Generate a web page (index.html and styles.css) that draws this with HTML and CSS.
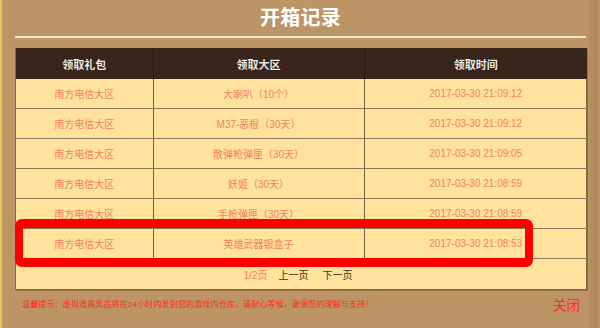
FILE: index.html
```html
<!DOCTYPE html>
<html lang="zh-CN">
<head>
<meta charset="utf-8">
<title>开箱记录</title>
<link rel="stylesheet" href="styles.css">
</head>
<body>
<div class="popup">
  <h1 class="title">开箱记录</h1>
  <div class="panel">
    <table class="records">
      <colgroup>
        <col class="c1"><col class="c2"><col class="c3">
      </colgroup>
      <thead>
        <tr><th>领取礼包</th><th>领取大区</th><th>领取时间</th></tr>
      </thead>
      <tbody>
        <tr><td>南方电信大区</td><td>大喇叭（10个）</td><td>2017-03-30 21:09:12</td></tr>
        <tr><td>南方电信大区</td><td>M37-恶棍（30天）</td><td>2017-03-30 21:09:12</td></tr>
        <tr><td>南方电信大区</td><td>散弹枪弹匣（30天）</td><td>2017-03-30 21:09:05</td></tr>
        <tr><td>南方电信大区</td><td>妖姬（30天）</td><td>2017-03-30 21:08:59</td></tr>
        <tr><td>南方电信大区</td><td>手枪弹匣（30天）</td><td>2017-03-30 21:08:59</td></tr>
        <tr><td>南方电信大区</td><td>英雄武器银盒子</td><td>2017-03-30 21:08:53</td></tr>
      </tbody>
    </table>
    <div class="pager">
      <span class="page-num">1/2页</span>
      <a class="page-link">上一页</a>
      <a class="page-link">下一页</a>
    </div>
  </div>
  <div class="footer">
    <p class="tip">温馨提示：虚拟道具奖品将在24小时内发到您的游戏内仓库，请耐心等候，谢谢您的理解与支持！</p>
    <a class="close">关闭</a>
  </div>
  <div class="highlight"></div>
</div>
</body>
</html>
```

FILE: styles.css
```css
html, body {
  margin: 0;
  padding: 0;
}

body {
  width: 600px;
  height: 328px;
  overflow: hidden;
  background: #bd9466;
  font-family: "Liberation Sans", "Noto Sans CJK SC", sans-serif;
}

.popup {
  position: relative;
  box-sizing: border-box;
  width: 600px;
  height: 328px;
  padding: 0 13px 0 13px;
  border-left: 2px solid #e9c45e;
  background: linear-gradient(to right, #bd9466 0, #bd9466 586px, #b88d5e 588px, #b3885a 595px, #bf9668 598px);
  display: flex;
  flex-direction: column;
}

.title {
  margin: 0;
  height: 36px;
  line-height: 36px;
  font-size: 20px;
  font-weight: bold;
  color: #ffffff;
  text-align: center;
  letter-spacing: 0.3px;
  border-bottom: 2px solid #f6e8cc;
  margin-right: 1px;
}

.panel {
  margin-top: 10px;
  width: 572px;
  box-sizing: border-box;
  background: #ffe29c;
  border: 1px solid #7d6840;
  border-top: none;
  box-shadow: 1px 1px 0 rgba(60, 40, 20, 0.35);
}

.records {
  width: 571px;
  border-collapse: collapse;
  table-layout: fixed;
  font-size: 10px;
}

.records col.c1 { width: 137px; }
.records col.c2 { width: 211px; }
.records col.c3 { width: 223px; }

.records th {
  height: 31px;
  padding: 0;
  background: #3a251a;
  color: #f4f0ea;
  font-size: 11px;
  font-weight: bold;
  text-shadow: 0 0 1px #000;
  border-left: 1px solid #2a1a10;
}

.records th:first-child,
.records td:first-child {
  border-left: none;
}

.records td {
  height: 29px;
  padding: 0;
  text-align: center;
  color: #f5805e;
  border-left: 1px solid #6e6048;
  border-bottom: 1px solid #8a7a5a;
}

.pager {
  height: 29px;
  display: flex;
  align-items: center;
  justify-content: center;
  font-size: 10px;
  padding-right: 6px;
  padding-top: 1px;
}

.page-num {
  color: #f5805e;
  margin-right: 11px;
}

.page-link {
  color: #3a3020;
  margin-right: 14px;
}

.page-link:last-child {
  margin-right: 0;
}

.footer {
  display: flex;
  align-items: flex-start;
  justify-content: space-between;
  padding: 8px 7px 0 7px;
}

.tip {
  margin: 0;
  font-size: 8px;
  letter-spacing: 0.15px;
  color: #ff2a1a;
}

.close {
  font-size: 13.5px;
  line-height: 16px;
  color: #ff2a2a;
  margin-top: 0;
}

.highlight {
  position: absolute;
  left: 13px;
  top: 219px;
  width: 518px;
  height: 48px;
  box-sizing: border-box;
  border: 9px solid #ff0000;
  border-left-width: 8px;
  border-right-width: 8px;
  border-radius: 7px;
}
```
